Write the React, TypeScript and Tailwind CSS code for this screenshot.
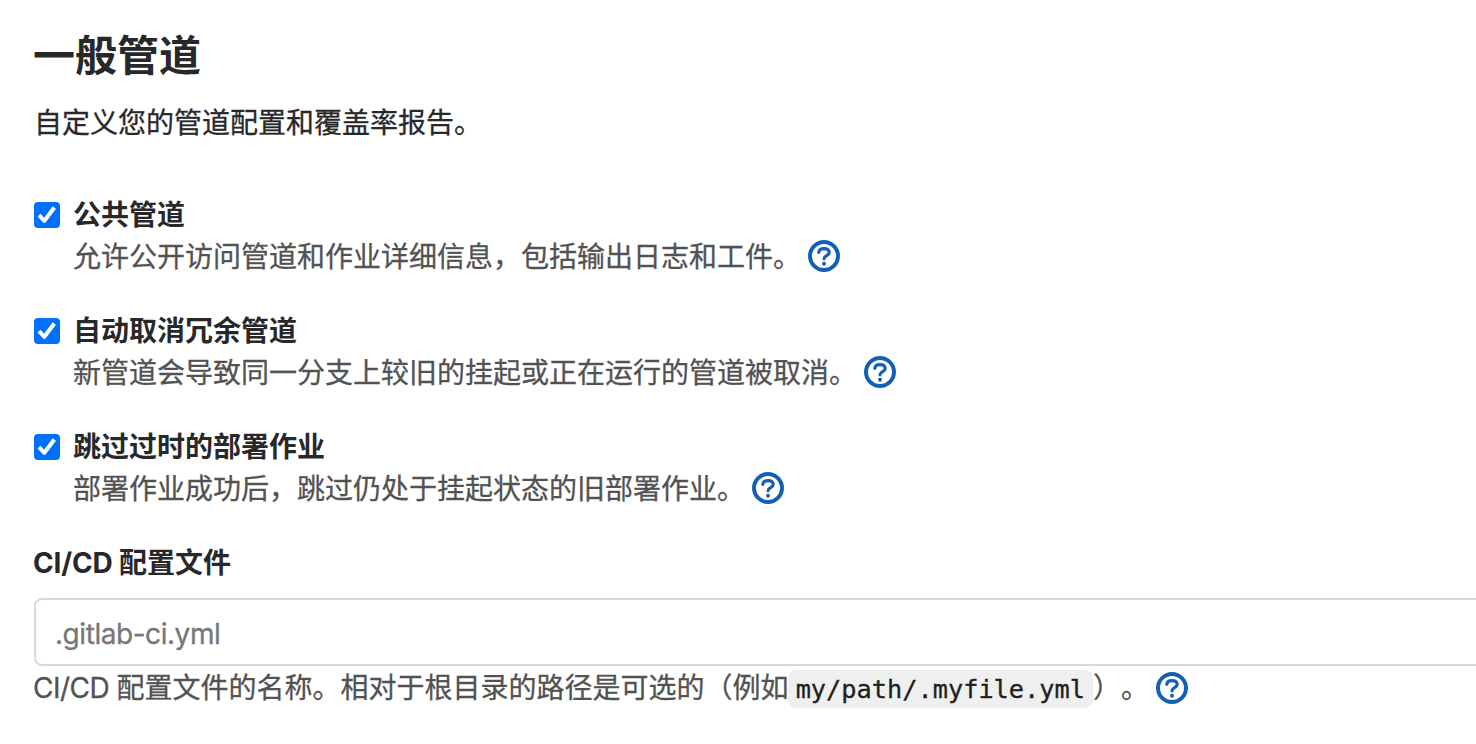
import React from 'react';

const HelpIcon: React.FC<{ className?: string }> = ({ className = '' }) => (
  <svg viewBox="0 0 16 16" className={`h-8 w-8 shrink-0 text-[#1460b4] ${className}`} fill="none" stroke="currentColor">
    <circle cx="8" cy="8" r="7" strokeWidth="2" />
    <path d="M5.4 6.2C5.5 5 6.6 4.3 8 4.3c1.6 0 2.6.8 2.6 2C10.6 7.9 8 7.8 8 9.4" strokeWidth="1.6" strokeLinecap="round" />
    <circle cx="8" cy="11.9" r="1" fill="currentColor" stroke="none" />
  </svg>
);

const options = [
  {
    title: '公共管道',
    description: '允许公开访问管道和作业详细信息，包括输出日志和工件。',
  },
  {
    title: '自动取消冗余管道',
    description: '新管道会导致同一分支上较旧的挂起或正在运行的管道被取消。',
  },
  {
    title: '跳过过时的部署作业',
    description: '部署作业成功后，跳过仍处于挂起状态的旧部署作业。',
  },
];

const Checkbox: React.FC = () => (
  <span className="mt-2 flex h-[26px] w-[26px] shrink-0 items-center justify-center rounded-[4px] bg-[#0070ff]">
    <svg viewBox="0 0 26 26" className="h-[26px] w-[26px]" fill="none" stroke="white" strokeWidth="4" strokeLinejoin="round">
      <path d="M5 13.2l5.4 5.6 9.9-13.3" />
    </svg>
  </span>
);

const App: React.FC = () => {
  return (
    <main className="h-[744px] overflow-hidden bg-white pl-[34px] pt-[31px] font-['Inter','Noto_Sans_CJK_SC',sans-serif] text-[28px] leading-[42px] text-[#28282a]">
      <h1 className="-ml-px h-[50px] text-[42px] font-bold leading-[50px]">一般管道</h1>
      <p className="mt-[21px] whitespace-nowrap [-webkit-text-stroke:0.3px]">自定义您的管道配置和覆盖率报告。</p>

      <div className="mt-[50px] flex flex-col gap-8">
        {options.map((option) => (
          <div key={option.title} className="flex gap-[13px]">
            <Checkbox />
            <div>
              <div className="font-bold">{option.title}</div>
              <div className="flex h-[42px] whitespace-nowrap text-[#525252] [-webkit-text-stroke:0.3px]">
                {option.description}
                <HelpIcon className="ml-[7px] mt-1" />
              </div>
            </div>
          </div>
        ))}
      </div>

      {/* Configuration file */}
      <label className="-ml-px mt-8 block font-bold">
        <span className="tracking-[-0.15px]">CI/CD </span>
        配置文件
      </label>
      <input
        type="text"
        placeholder=".gitlab-ci.yml"
        className="mt-3.5 block h-[68px] w-[1500px] rounded-lg border-2 border-[#d8d8d8] pb-0 pl-[19px] pt-[3px] tracking-[-0.45px] [-webkit-text-stroke:0.3px] placeholder:text-[#777777]"
      />
      <div className="-ml-px mt-px flex h-[42px] whitespace-nowrap text-[#525252] [-webkit-text-stroke:0.3px]">
        <span className="whitespace-pre tracking-[-0.5px]">CI/CD </span>
        配置文件的名称。相对于根目录的路径是可选的（例如
        <code className="-ml-px mt-[3px] h-[38px] rounded-lg bg-[#efefef] px-2 font-['DejaVu_Sans_Mono',monospace] text-[25.3px] leading-[39px] text-[#202020]">my/path/.myfile.yml</code>
        <span>）</span>
        <span>。</span>
        <HelpIcon className="ml-[7px] mt-[5px]" />
      </div>
    </main>
  );
};

export default App;
